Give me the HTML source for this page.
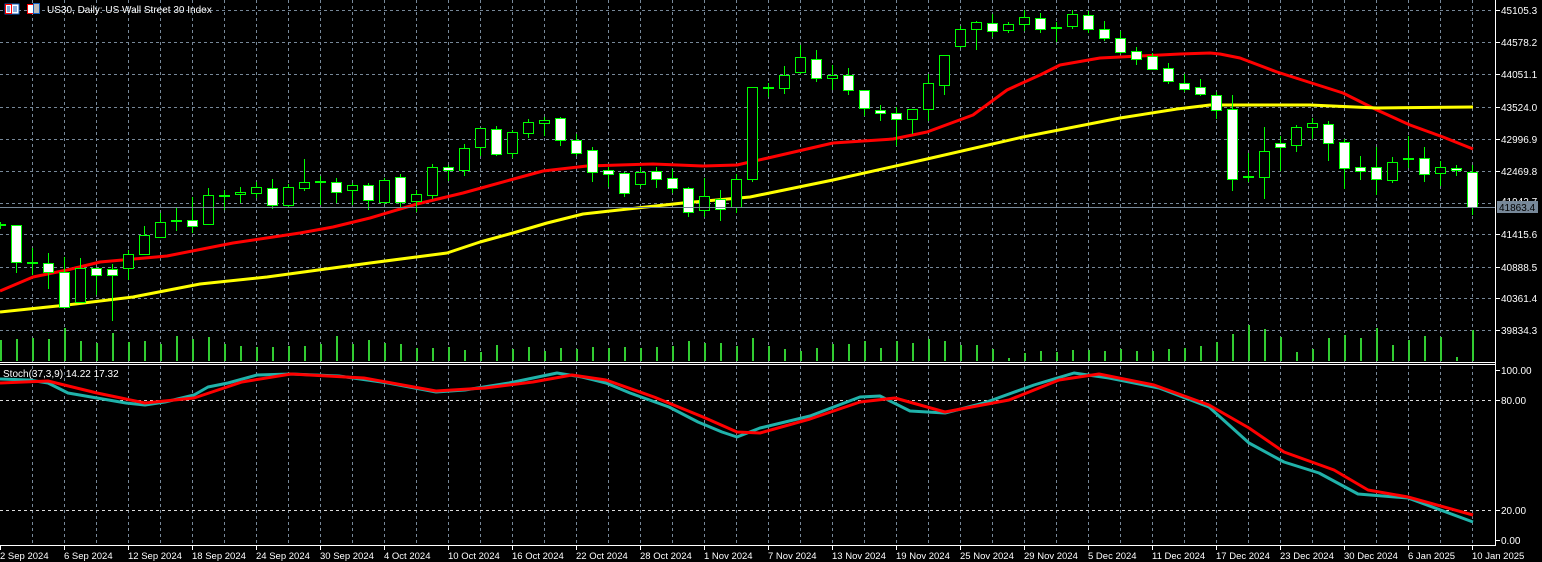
<!DOCTYPE html>
<html><head><meta charset="utf-8"><style>
html,body{margin:0;padding:0;background:#000;overflow:hidden}
svg{display:block}
text{font-family:"Liberation Sans",sans-serif;font-size:10px;fill:#fff}
.d text{font-size:9.5px}
</style></head><body>
<svg width="1542" height="562" viewBox="0 0 1542 562" xmlns="http://www.w3.org/2000/svg" shape-rendering="crispEdges">
<rect width="1542" height="562" fill="#000"/>
<g stroke="#778899" stroke-dasharray="3 3" stroke-width="1">
<path d="M32.5 0V545M64.5 0V545M96.5 0V545M128.5 0V545M160.5 0V545M192.5 0V545M224.5 0V545M256.5 0V545M288.5 0V545M320.5 0V545M352.5 0V545M384.5 0V545M416.5 0V545M448.5 0V545M480.5 0V545M512.5 0V545M544.5 0V545M576.5 0V545M608.5 0V545M640.5 0V545M672.5 0V545M704.5 0V545M736.5 0V545M768.5 0V545M800.5 0V545M832.5 0V545M864.5 0V545M896.5 0V545M928.5 0V545M960.5 0V545M992.5 0V545M1024.5 0V545M1056.5 0V545M1088.5 0V545M1120.5 0V545M1152.5 0V545M1184.5 0V545M1216.5 0V545M1248.5 0V545M1280.5 0V545M1312.5 0V545M1344.5 0V545M1376.5 0V545M1408.5 0V545M1440.5 0V545M1472.5 0V545"/>
<path d="M0 10.5H1494M0 42.5H1494M0 74.5H1494M0 107.5H1494M0 139.5H1494M0 171.5H1494M0 203.5H1494M0 234.5H1494M0 267.5H1494M0 298.5H1494M0 330.5H1494"/>
</g>
<g stroke="#ddd" stroke-dasharray="3 3"><path d="M0 400.5H1494M0 510.5H1494"/></g>
<path stroke="#32cd32" stroke-width="2" fill="none" d="M1 361V340M17 361V339M33 361V338M49 361V339M65 361V328M81 361V341M97 361V343M113 361V333M129 361V342M145 361V341M161 361V344M177 361V336M193 361V339M209 361V337M225 361V344M241 361V346M257 361V347M273 361V347M289 361V346M305 361V346M321 361V344M337 361V336M353 361V344M369 361V340M385 361V343M401 361V344M417 361V348M433 361V348M449 361V347M465 361V350M481 361V352M497 361V345M513 361V349M529 361V347M545 361V351M561 361V348M577 361V349M593 361V347M609 361V348M625 361V347M641 361V348M657 361V347M673 361V346M689 361V341M705 361V343M721 361V343M737 361V346M753 361V338M769 361V346M785 361V349M801 361V351M817 361V348M833 361V344M849 361V344M865 361V341M881 361V348M897 361V341M913 361V343M929 361V339M945 361V341M961 361V345M977 361V345M993 361V349M1009 361V358M1025 361V353M1041 361V351M1057 361V352M1073 361V350M1089 361V350M1105 361V351M1121 361V349M1137 361V351M1153 361V351M1169 361V349M1185 361V348M1201 361V346M1217 361V342M1233 361V334M1249 361V325M1265 361V329M1281 361V337M1297 361V352M1313 361V349M1329 361V338M1345 361V335M1361 361V338M1377 361V328M1393 361V345M1409 361V340M1425 361V336M1441 361V337M1457 361V357M1473 361V330"/>
<g fill="none" stroke-width="3" stroke-linejoin="round" shape-rendering="auto">
<polyline stroke="#ff0000" points="0,291 33,277 67,270 100,262 167,256 233,243 300,233 333,227 370,218 417,204 463,193 510,180 543,171 587,166 653,164 703,166 737,165 750,162 768,158 833,143 893,139 927,132 973,115 1007,90 1040,75 1060,65 1100,58 1120,57 1140,56 1180,54 1210,53 1220,54 1240,58 1277,72 1343,93 1377,110 1410,125 1443,137 1473,149"/>
<polyline stroke="#ffff00" points="0,312 67,305 133,297 200,284 267,277 333,268 370,263 447,253 480,242 513,233 547,223 583,214 637,208 683,203 750,197 833,180 927,159 1023,137 1120,118 1177,109 1210,105 1310,105 1377,108 1473,107"/>
</g>
<path stroke="#00ff00" fill="none" d="M0.5 222V229M16.5 225V273M32.5 248V275M48.5 253V289M64.5 257V307M80.5 258V302M96.5 268V295M112.5 264V321M128.5 250V280M144.5 226V254M160.5 213V237M176.5 207V231M192.5 197V233M208.5 188V224M224.5 190V210M240.5 187V203M256.5 182V198M272.5 179V209M288.5 184V207M304.5 159V191M320.5 176V205M336.5 178V203M352.5 183V205M368.5 183V210M384.5 178V204M400.5 174V207M416.5 190V212M432.5 164V199M448.5 165V181M464.5 144V176M480.5 128V156M496.5 126V156M512.5 130V158M528.5 119V138M544.5 117V136M560.5 117V146M576.5 134V156M592.5 147V182M608.5 167V187M624.5 172V197M640.5 167V187M656.5 167V188M672.5 169V193M688.5 187V217M704.5 178V217M720.5 190V221M736.5 174V213M752.5 87V182M768.5 83V97M784.5 66V94M800.5 45V74M816.5 50V82M832.5 65V90M848.5 68V95M864.5 90V116M880.5 105V121M896.5 107V146M912.5 109V134M928.5 74V121M944.5 55V95M960.5 26V48M976.5 21V50M992.5 14V37M1008.5 22V33M1024.5 10V31M1040.5 13V33M1056.5 22V42M1072.5 10V29M1088.5 11V33M1104.5 21V41M1120.5 31V54M1136.5 47V65M1152.5 53V69M1168.5 63V84M1184.5 74V92M1200.5 79V96M1216.5 92V119M1232.5 95V191M1248.5 153V182M1264.5 127V199M1280.5 136V171M1296.5 125V152M1312.5 118V139M1328.5 121V161M1344.5 139V189M1360.5 156V180M1376.5 147V195M1392.5 157V183M1408.5 136V168M1424.5 147V182M1440.5 161V186M1456.5 165V176M1472.5 165V215"/>
<path stroke="#00ff00" stroke-width="2" fill="none" d="M-5 225H6M27 263H38M171 221H182M219 196H230M315 182H326M763 88H774M1051 28H1062M1243 177H1254M1403 159H1414"/>
<g fill="#fff" stroke="#00ff00">
<rect x="11.5" y="225.5" width="10" height="37"/><rect x="43.5" y="263.5" width="10" height="9"/><rect x="59.5" y="272.5" width="10" height="35"/><rect x="91.5" y="268.5" width="10" height="7"/><rect x="107.5" y="269.5" width="10" height="6"/><rect x="187.5" y="220.5" width="10" height="6"/><rect x="267.5" y="188.5" width="10" height="17"/><rect x="331.5" y="182.5" width="10" height="10"/><rect x="363.5" y="185.5" width="10" height="15"/><rect x="395.5" y="177.5" width="10" height="25"/><rect x="443.5" y="167.5" width="10" height="3"/><rect x="491.5" y="129.5" width="10" height="25"/><rect x="555.5" y="118.5" width="10" height="22"/><rect x="571.5" y="140.5" width="10" height="13"/><rect x="587.5" y="150.5" width="10" height="22"/><rect x="603.5" y="170.5" width="10" height="4"/><rect x="619.5" y="173.5" width="10" height="20"/><rect x="651.5" y="171.5" width="10" height="8"/><rect x="667.5" y="178.5" width="10" height="10"/><rect x="683.5" y="188.5" width="10" height="24"/><rect x="715.5" y="199.5" width="10" height="10"/><rect x="811.5" y="59.5" width="10" height="19"/><rect x="843.5" y="75.5" width="10" height="15"/><rect x="859.5" y="90.5" width="10" height="18"/><rect x="875.5" y="110.5" width="10" height="3"/><rect x="891.5" y="113.5" width="10" height="6"/><rect x="987.5" y="23.5" width="10" height="8"/><rect x="1035.5" y="18.5" width="10" height="11"/><rect x="1083.5" y="15.5" width="10" height="14"/><rect x="1099.5" y="29.5" width="10" height="9"/><rect x="1115.5" y="38.5" width="10" height="14"/><rect x="1131.5" y="51.5" width="10" height="8"/><rect x="1147.5" y="56.5" width="10" height="13"/><rect x="1163.5" y="68.5" width="10" height="13"/><rect x="1179.5" y="83.5" width="10" height="6"/><rect x="1195.5" y="87.5" width="10" height="7"/><rect x="1211.5" y="95.5" width="10" height="15"/><rect x="1227.5" y="109.5" width="10" height="70"/><rect x="1275.5" y="143.5" width="10" height="4"/><rect x="1323.5" y="124.5" width="10" height="19"/><rect x="1339.5" y="142.5" width="10" height="26"/><rect x="1355.5" y="167.5" width="10" height="4"/><rect x="1371.5" y="167.5" width="10" height="12"/><rect x="1419.5" y="158.5" width="10" height="16"/><rect x="1451.5" y="168.5" width="10" height="2"/><rect x="1467.5" y="172.5" width="10" height="35"/>
</g>
<g fill="#000" stroke="#00ff00">
<rect x="75.5" y="268.5" width="10" height="34"/><rect x="123.5" y="254.5" width="10" height="14"/><rect x="139.5" y="235.5" width="10" height="19"/><rect x="155.5" y="222.5" width="10" height="15"/><rect x="203.5" y="195.5" width="10" height="29"/><rect x="235.5" y="192.5" width="10" height="2"/><rect x="251.5" y="187.5" width="10" height="6"/><rect x="283.5" y="187.5" width="10" height="18"/><rect x="299.5" y="182.5" width="10" height="6"/><rect x="347.5" y="185.5" width="10" height="5"/><rect x="379.5" y="180.5" width="10" height="22"/><rect x="411.5" y="194.5" width="10" height="7"/><rect x="427.5" y="167.5" width="10" height="28"/><rect x="459.5" y="148.5" width="10" height="22"/><rect x="475.5" y="128.5" width="10" height="19"/><rect x="507.5" y="132.5" width="10" height="21"/><rect x="523.5" y="122.5" width="10" height="11"/><rect x="539.5" y="120.5" width="10" height="3"/><rect x="635.5" y="172.5" width="10" height="12"/><rect x="699.5" y="196.5" width="10" height="14"/><rect x="731.5" y="179.5" width="10" height="28"/><rect x="747.5" y="87.5" width="10" height="92"/><rect x="779.5" y="75.5" width="10" height="13"/><rect x="795.5" y="57.5" width="10" height="15"/><rect x="827.5" y="75.5" width="10" height="3"/><rect x="907.5" y="109.5" width="10" height="10"/><rect x="923.5" y="83.5" width="10" height="26"/><rect x="939.5" y="55.5" width="10" height="30"/><rect x="955.5" y="29.5" width="10" height="17"/><rect x="971.5" y="22.5" width="10" height="7"/><rect x="1003.5" y="24.5" width="10" height="6"/><rect x="1019.5" y="17.5" width="10" height="7"/><rect x="1067.5" y="14.5" width="10" height="12"/><rect x="1259.5" y="151.5" width="10" height="26"/><rect x="1291.5" y="127.5" width="10" height="18"/><rect x="1307.5" y="123.5" width="10" height="4"/><rect x="1387.5" y="162.5" width="10" height="18"/><rect x="1435.5" y="167.5" width="10" height="6"/>
</g>
<path stroke="#778899" d="M0 207.5H1495"/>
<g fill="none" stroke-width="3" stroke-linejoin="round" shape-rendering="auto">
<polyline stroke="#20b2aa" points="0,379 29,380 48,383 68,393 97,398 126,403 145,405 165,402 194,395 208,387 228,383 257,375 291,374 339,376 388,383 436,392 465,390 509,383 533,378 557,373 582,377 606,383 630,393 669,407 698,422 722,432 737,437 760,428 810,416 860,397 880,396 910,411 945,413 984,403 1034,385 1074,373 1109,378 1159,388 1209,407 1249,443 1284,462 1319,473 1358,494 1408,498 1473,522"/>
<polyline stroke="#ff0000" points="0,383 48,381 97,393 145,403 194,398 242,382 291,374 364,378 436,391 485,388 533,382 572,375 606,380 654,397 703,417 737,432 760,433 810,419 860,402 895,398 945,412 1009,400 1059,380 1099,374 1154,385 1209,405 1249,428 1284,452 1334,470 1368,490 1408,497 1473,515"/>
</g>
<g stroke="#fff" fill="none">
<path d="M0 362.5H1496M0 364.5H1496M0 545.5H1496M1495.5 0V546"/>
<path d="M1495 10.5h5M1495 42.5h5M1495 74.5h5M1495 107.5h5M1495 139.5h5M1495 171.5h5M1495 234.5h5M1495 267.5h5M1495 298.5h5M1495 330.5h5M1495 370.5h5M1495 400.5h5M1495 510.5h5M1495 540.5h5"/>
<path d="M0.5 545V550M64.5 545V550M128.5 545V550M192.5 545V550M256.5 545V550M320.5 545V550M384.5 545V550M448.5 545V550M512.5 545V550M576.5 545V550M640.5 545V550M704.5 545V550M768.5 545V550M832.5 545V550M896.5 545V550M960.5 545V550M1024.5 545V550M1088.5 545V550M1152.5 545V550M1216.5 545V550M1280.5 545V550M1344.5 545V550M1408.5 545V550M1472.5 545V550"/>
</g>
<g>
<text x="1501" y="14">45105.3</text><text x="1501" y="46">44578.2</text><text x="1501" y="78">44051.1</text><text x="1501" y="111">43524.0</text><text x="1501" y="143">42996.9</text><text x="1501" y="175">42469.8</text><text x="1501" y="205">41942.7</text><text x="1501" y="238">41415.6</text><text x="1501" y="271">40888.5</text><text x="1501" y="302">40361.4</text><text x="1501" y="334">39834.3</text>
<text x="1501" y="374">100.00</text><text x="1501" y="404">80.00</text><text x="1501" y="514">20.00</text><text x="1501" y="544">0.00</text>
</g>
<rect x="1497" y="201" width="41" height="12" fill="#778899"/>
<text x="1499" y="211" style="fill:#000">41863.4</text>
<g class="d">
<text x="0" y="559">2 Sep 2024</text><text x="64" y="559">6 Sep 2024</text><text x="128" y="559">12 Sep 2024</text><text x="192" y="559">18 Sep 2024</text><text x="256" y="559">24 Sep 2024</text><text x="320" y="559">30 Sep 2024</text><text x="384" y="559">4 Oct 2024</text><text x="448" y="559">10 Oct 2024</text><text x="512" y="559">16 Oct 2024</text><text x="576" y="559">22 Oct 2024</text><text x="640" y="559">28 Oct 2024</text><text x="704" y="559">1 Nov 2024</text><text x="768" y="559">7 Nov 2024</text><text x="832" y="559">13 Nov 2024</text><text x="896" y="559">19 Nov 2024</text><text x="960" y="559">25 Nov 2024</text><text x="1024" y="559">29 Nov 2024</text><text x="1088" y="559">5 Dec 2024</text><text x="1152" y="559">11 Dec 2024</text><text x="1216" y="559">17 Dec 2024</text><text x="1280" y="559">23 Dec 2024</text><text x="1344" y="559">30 Dec 2024</text><text x="1408" y="559">6 Jan 2025</text><text x="1472" y="559">10 Jan 2025</text>
</g>
<g>
<rect x="5" y="4" width="14" height="10" fill="#fff" stroke="#1060c0"/>
<rect x="5.5" y="4.5" width="6" height="9" fill="#fff" stroke="#ff0000"/>
<path d="M7 7h3M7 9h3M7 11h3M13 7h4M13 9h4M13 11h4" stroke="#1060c0"/>
<rect x="27.5" y="4.5" width="6" height="9" fill="#fff" stroke="#ff0000"/>
<rect x="33.5" y="3.5" width="6" height="10" fill="#bbb" stroke="#1060c0"/>
</g>
<text x="47" y="13">US30, Daily:  US Wall Street 30 Index</text>
<text x="3" y="377">Stoch(37,3,9) 14.22 17.32</text>
</svg>
</body></html>
